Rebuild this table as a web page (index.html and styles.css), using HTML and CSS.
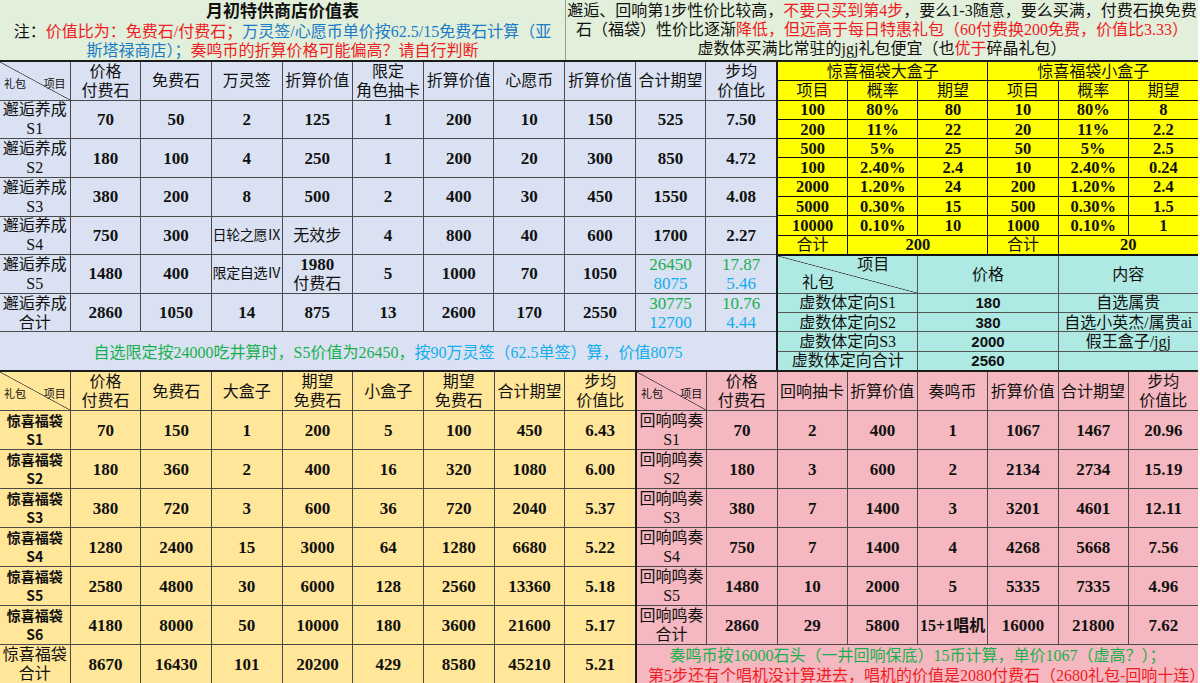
FILE: index.html
```html
<!DOCTYPE html>
<html lang="zh">
<head>
<meta charset="utf-8">
<title>月初特供商店价值表</title>
<link rel="stylesheet" href="styles.css">
</head>
<body>
<div class="sheet">
  <div class="band top">
    <div class="note">
      <div class="title">月初特供商店价值表</div>
      <div class="line">注：<span class="red">价值比为：免费石/付费石；</span><span class="nblue">万灵签/心愿币单价按62.5/15免费石计算（亚</span></div>
      <div class="line"><span class="nblue">斯塔禄商店）；</span><span class="red">奏鸣币的折算价格可能偏高？请自行判断</span></div>
    </div>
    <div class="note">
      <div class="line">邂逅、回响第1步性价比较高，<span class="red">不要只买到第4步</span>，要么1-3随意，要么买满，付费石换免费</div>
      <div class="line">石（福袋）性价比逐渐<span class="red">降低，但远高于每日特惠礼包（60付费换200免费，价值比3.33）</span></div>
      <div class="line">虚数体买满比常驻的jgj礼包便宜（也<span class="red">优于</span>碎晶礼包）</div>
    </div>
  </div>

  <div class="band mid">
    <div class="tbl blue">
      <div class="diag"><span>礼包</span><span>项目</span></div>
      <div><span>价格</span><span>付费石</span></div>
      <div>免费石</div>
      <div>万灵签</div>
      <div>折算价值</div>
      <div><span>限定</span><span>角色抽卡</span></div>
      <div>折算价值</div>
      <div>心愿币</div>
      <div>折算价值</div>
      <div>合计期望</div>
      <div><span>步均</span><span>价值比</span></div>

      <div><span>邂逅养成</span><span>S1</span></div>
      <div class="n">70</div><div class="n">50</div><div class="n">2</div><div class="n">125</div><div class="n">1</div><div class="n">200</div><div class="n">10</div><div class="n">150</div><div class="n">525</div><div class="n">7.50</div>

      <div><span>邂逅养成</span><span>S2</span></div>
      <div class="n">180</div><div class="n">100</div><div class="n">4</div><div class="n">250</div><div class="n">1</div><div class="n">200</div><div class="n">20</div><div class="n">300</div><div class="n">850</div><div class="n">4.72</div>

      <div><span>邂逅养成</span><span>S3</span></div>
      <div class="n">380</div><div class="n">200</div><div class="n">8</div><div class="n">500</div><div class="n">2</div><div class="n">400</div><div class="n">30</div><div class="n">450</div><div class="n">1550</div><div class="n">4.08</div>

      <div><span>邂逅养成</span><span>S4</span></div>
      <div class="n">750</div><div class="n">300</div><div class="tight">日轮之愿Ⅸ</div><div>无效步</div><div class="n">4</div><div class="n">800</div><div class="n">40</div><div class="n">600</div><div class="n">1700</div><div class="n">2.27</div>

      <div><span>邂逅养成</span><span>S5</span></div>
      <div class="n">1480</div><div class="n">400</div><div class="tight">限定自选Ⅳ</div><div class="n"><span>1980</span><span class="sub">付费石</span></div><div class="n">5</div><div class="n">1000</div><div class="n">70</div><div class="n">1050</div>
      <div class="pair"><span class="g">26450</span><span class="b">8075</span></div>
      <div class="pair"><span class="g">17.87</span><span class="b">5.46</span></div>

      <div><span>邂逅养成</span><span>合计</span></div>
      <div class="n">2860</div><div class="n">1050</div><div class="n">14</div><div class="n">875</div><div class="n">13</div><div class="n">2600</div><div class="n">170</div><div class="n">2550</div>
      <div class="pair"><span class="g">30775</span><span class="b">12700</span></div>
      <div class="pair"><span class="g">10.76</span><span class="b">4.44</span></div>

      <div class="wide bnote"><div class="line"><span class="g">自选限定按24000吃井算时，S5价值为26450，</span><span class="b">按90万灵签（62.5单签）算，价值8075</span></div></div>
    </div>

    <div class="side">
      <div class="tbl yellow">
        <div class="s3">惊喜福袋大盒子</div><div class="s3">惊喜福袋小盒子</div>
        <div>项目</div><div>概率</div><div>期望</div><div>项目</div><div>概率</div><div>期望</div>
        <div class="y">100</div><div class="y">80%</div><div class="y">80</div><div class="y">10</div><div class="y">80%</div><div class="y">8</div>
        <div class="y">200</div><div class="y">11%</div><div class="y">22</div><div class="y">20</div><div class="y">11%</div><div class="y">2.2</div>
        <div class="y">500</div><div class="y">5%</div><div class="y">25</div><div class="y">50</div><div class="y">5%</div><div class="y">2.5</div>
        <div class="y">100</div><div class="y">2.40%</div><div class="y">2.4</div><div class="y">10</div><div class="y">2.40%</div><div class="y">0.24</div>
        <div class="y">2000</div><div class="y">1.20%</div><div class="y">24</div><div class="y">200</div><div class="y">1.20%</div><div class="y">2.4</div>
        <div class="y">5000</div><div class="y">0.30%</div><div class="y">15</div><div class="y">500</div><div class="y">0.30%</div><div class="y">1.5</div>
        <div class="y">10000</div><div class="y">0.10%</div><div class="y">10</div><div class="y">1000</div><div class="y">0.10%</div><div class="y">1</div>
        <div>合计</div><div class="s2 y">200</div><div>合计</div><div class="s2 y">20</div>
      </div>
      <div class="tbl teal">
        <div class="diag2"><span class="tr">项目</span><span class="bl">礼包</span></div>
        <div>价格</div>
        <div>内容</div>
        <div>虚数体定向S1</div><div class="ns">180</div><div>自选属贵</div>
        <div>虚数体定向S2</div><div class="ns">380</div><div>自选小英杰/属贵ai</div>
        <div>虚数体定向S3</div><div class="ns">2000</div><div>假王盒子/jgj</div>
        <div>虚数体定向合计</div><div class="ns">2560</div><div></div>
      </div>
    </div>
  </div>

  <div class="band bottom">
    <div class="tbl gold">
      <div class="diag"><span>礼包</span><span>项目</span></div>
      <div><span>价格</span><span>付费石</span></div>
      <div>免费石</div>
      <div>大盒子</div>
      <div><span>期望</span><span>免费石</span></div>
      <div>小盒子</div>
      <div><span>期望</span><span>免费石</span></div>
      <div>合计期望</div>
      <div><span>步均</span><span>价值比</span></div>

      <div class="gl"><span>惊喜福袋</span><span>S1</span></div>
      <div class="n">70</div><div class="n">150</div><div class="n">1</div><div class="n">200</div><div class="n">5</div><div class="n">100</div><div class="n">450</div><div class="n">6.43</div>
      <div class="gl"><span>惊喜福袋</span><span>S2</span></div>
      <div class="n">180</div><div class="n">360</div><div class="n">2</div><div class="n">400</div><div class="n">16</div><div class="n">320</div><div class="n">1080</div><div class="n">6.00</div>
      <div class="gl"><span>惊喜福袋</span><span>S3</span></div>
      <div class="n">380</div><div class="n">720</div><div class="n">3</div><div class="n">600</div><div class="n">36</div><div class="n">720</div><div class="n">2040</div><div class="n">5.37</div>
      <div class="gl"><span>惊喜福袋</span><span>S4</span></div>
      <div class="n">1280</div><div class="n">2400</div><div class="n">15</div><div class="n">3000</div><div class="n">64</div><div class="n">1280</div><div class="n">6680</div><div class="n">5.22</div>
      <div class="gl"><span>惊喜福袋</span><span>S5</span></div>
      <div class="n">2580</div><div class="n">4800</div><div class="n">30</div><div class="n">6000</div><div class="n">128</div><div class="n">2560</div><div class="n">13360</div><div class="n">5.18</div>
      <div class="gl"><span>惊喜福袋</span><span>S6</span></div>
      <div class="n">4180</div><div class="n">8000</div><div class="n">50</div><div class="n">10000</div><div class="n">180</div><div class="n">3600</div><div class="n">21600</div><div class="n">5.17</div>
      <div><span>惊喜福袋</span><span>合计</span></div>
      <div class="n">8670</div><div class="n">16430</div><div class="n">101</div><div class="n">20200</div><div class="n">429</div><div class="n">8580</div><div class="n">45210</div><div class="n">5.21</div>
    </div>

    <div class="tbl pink">
      <div class="diag"><span>礼包</span><span>项目</span></div>
      <div><span>价格</span><span>付费石</span></div>
      <div>回响抽卡</div>
      <div>折算价值</div>
      <div>奏鸣币</div>
      <div>折算价值</div>
      <div>合计期望</div>
      <div><span>步均</span><span>价值比</span></div>

      <div><span>回响鸣奏</span><span>S1</span></div>
      <div class="n">70</div><div class="n">2</div><div class="n">400</div><div class="n">1</div><div class="n">1067</div><div class="n">1467</div><div class="n">20.96</div>
      <div><span>回响鸣奏</span><span>S2</span></div>
      <div class="n">180</div><div class="n">3</div><div class="n">600</div><div class="n">2</div><div class="n">2134</div><div class="n">2734</div><div class="n">15.19</div>
      <div><span>回响鸣奏</span><span>S3</span></div>
      <div class="n">380</div><div class="n">7</div><div class="n">1400</div><div class="n">3</div><div class="n">3201</div><div class="n">4601</div><div class="n">12.11</div>
      <div><span>回响鸣奏</span><span>S4</span></div>
      <div class="n">750</div><div class="n">7</div><div class="n">1400</div><div class="n">4</div><div class="n">4268</div><div class="n">5668</div><div class="n">7.56</div>
      <div><span>回响鸣奏</span><span>S5</span></div>
      <div class="n">1480</div><div class="n">10</div><div class="n">2000</div><div class="n">5</div><div class="n">5335</div><div class="n">7335</div><div class="n">4.96</div>
      <div><span>回响鸣奏</span><span>合计</span></div>
      <div class="n">2860</div><div class="n">29</div><div class="n">5800</div><div class="n sm">15+1唱机</div><div class="n">16000</div><div class="n">21800</div><div class="n">7.62</div>

      <div class="wide pnote">
        <div class="line g">奏鸣币按16000石头（一井回响保底）15币计算，单价1067（虚高？）；</div>
        <div class="line red l2">第5步还有个唱机没计算进去，唱机的价值是2080付费石（2680礼包-回响十连）</div>
      </div>
    </div>
  </div>
</div>
</body>
</html>
```

FILE: styles.css
```css
* { box-sizing: border-box; margin: 0; padding: 0; }

body {
  margin: 0;
  background: #ffffff;
  font-family: "Liberation Serif", "Noto Sans CJK SC", serif;
  font-size: 16px;
  color: #111;
}

.sheet {
  width: 1198px;
  height: 683px;
  display: flex;
  flex-direction: column;
  overflow: hidden;
}

.band { display: grid; flex: none; min-height: 0; }

/* ---------- top notes ---------- */
.top {
  height: 62px;
  grid-template-columns: 565px 1fr;
  column-gap: 1px;
  background: #9c9c9c;
  border-bottom: 2px solid #1c1c1c;
}

.note {
  background: #e2efda;
  display: flex;
  flex-direction: column;
  align-items: center;
  padding-top: 1px;
  line-height: 19px;
  white-space: nowrap;
  overflow: hidden;
}

.title { font-size: 17px; font-weight: bold; line-height: 21px; }

.red { color: #f01c24; }
.nblue { color: #1a7bc6; }
.g { color: #18b04e; }
.b { color: #12aeee; }

/* ---------- middle band ---------- */
.mid {
  height: 310px;
  grid-template-columns: 776px 1fr;
  column-gap: 2px;
  background: #1c1c1c;
  border-bottom: 2px solid #1c1c1c;
}

.side {
  display: flex;
  flex-direction: column;
  min-height: 0;
}

.tbl {
  display: grid;
  gap: 1px;
  background: #4a4a4a;
  min-height: 0;
  overflow: hidden;
}

.tbl > div {
  display: flex;
  flex-direction: column;
  align-items: center;
  justify-content: center;
  text-align: center;
  line-height: 19px;
  white-space: nowrap;
  overflow: hidden;
  min-height: 0;
}

.blue {
  grid-template-columns: repeat(11, minmax(0, 1fr));
  grid-template-rows: repeat(8, minmax(0, 1fr));
}
.blue > div { background-color: #d9e1f2; }

.yellow {
  height: 194px;
  flex: none;
  grid-template-columns: repeat(6, minmax(0, 1fr));
  grid-template-rows: repeat(10, minmax(0, 1fr));
  background: #111;
  border-bottom: 2px solid #111;
}
.yellow > div { background-color: #ffff00; }

.teal {
  flex: 1;
  grid-template-columns: repeat(3, minmax(0, 1fr));
  grid-template-rows: minmax(0, 2fr) repeat(4, minmax(0, 1fr));
  background: #555;
}
.teal > div { background-color: #aee9e3; }

.bottom {
  height: 311px;
  grid-template-columns: 635px 1fr;
  grid-template-rows: minmax(0, 1fr);
  column-gap: 2px;
  background: #1c1c1c;
}

.gold {
  grid-template-columns: repeat(9, minmax(0, 1fr));
  grid-template-rows: repeat(8, minmax(0, 1fr));
}
.gold > div { background-color: #ffe699; }

.pink {
  grid-template-columns: repeat(8, minmax(0, 1fr));
  grid-template-rows: repeat(8, minmax(0, 1fr));
}
.pink > div { background-color: #f5b8c0; }

/* ---------- cells ---------- */
.n { font-weight: bold; font-size: 17px; }
.n .sub { font-weight: normal; font-size: 16px; }
.n.sm { font-size: 16px; }
.y { font-weight: bold; font-size: 16.5px; }
.ns { font-family: "Liberation Sans", "Noto Sans CJK SC", sans-serif; font-weight: bold; font-size: 15px; }
.pair { font-size: 17px; }
.tight { font-size: 14px; letter-spacing: -0.3px; }

.tbl > .gl {
  font-family: "Noto Sans CJK SC", sans-serif;
  font-weight: bold;
  font-size: 14px;
  line-height: 19px;
}

.s2 { grid-column: span 2; }
.s3 { grid-column: span 3; }
.wide { grid-column: 1 / -1; }

.tbl > .bnote { padding-top: 3px; }

.tbl > .pnote {
  justify-content: flex-start;
  padding-top: 1px;
  line-height: 20px;
}
.tbl > .pnote .l2 { align-self: flex-start; margin-left: 11px; }

/* diagonal header cells */
.tbl > .diag {
  flex-direction: row;
  justify-content: space-between;
  align-items: flex-end;
  padding: 0 4px 6px 4px;
  font-size: 11px;
  background-image: linear-gradient(to top right, transparent calc(50% - 0.7px), #3a3a3a 50%, transparent calc(50% + 0.7px));
}

.tbl > .diag2 {
  align-items: stretch;
  justify-content: center;
  padding: 0 24px;
  line-height: 18px;
  background-image: linear-gradient(to top right, transparent calc(50% - 0.7px), #3a3a3a 50%, transparent calc(50% + 0.7px));
}
.diag2 .tr { align-self: flex-end; margin-right: 4px; }
.diag2 .bl { align-self: flex-start; }
```
